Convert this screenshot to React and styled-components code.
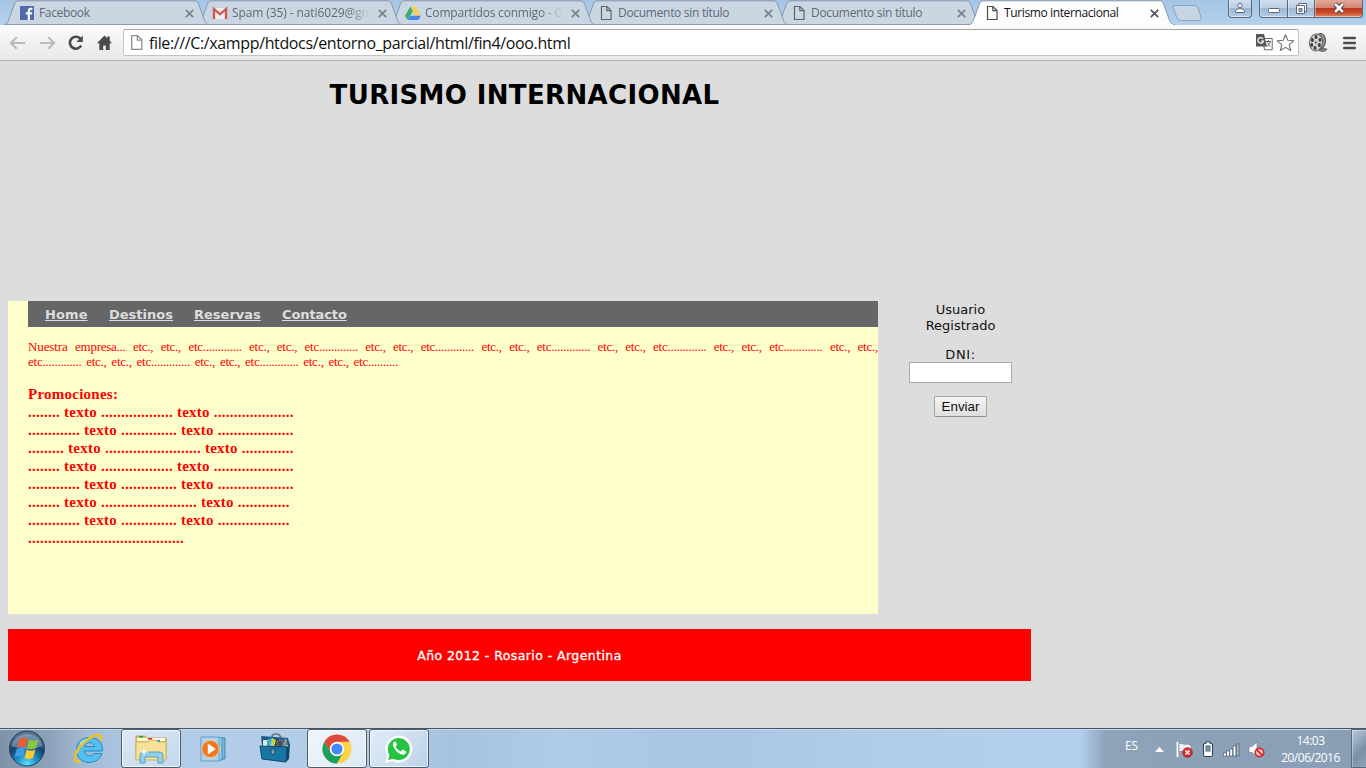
import React from "react";
import styled, { createGlobalStyle } from "styled-components";

const ui = '"Open Sans", "Noto Sans", sans-serif';
const verdana = '"DejaVu Sans", sans-serif';
const times = '"Liberation Serif", serif';

const GlobalStyle = createGlobalStyle`
  * { box-sizing: border-box; }
  body { margin: 0; overflow: hidden; }
`;

const Screen = styled.div`
  width: 1366px;
  height: 768px;
  display: flex;
  flex-direction: column;
  overflow: hidden;
  background: #dddddd;
`;

/* Browser window */
const TabStrip = styled.div`
  height: 25px;
  flex: none;
  display: flex;
  padding-left: 4px;
  background: linear-gradient(#a6c5e5 0, #b4d0ec 100%);
  position: relative;
  z-index: 1;
`;
const TabItem = styled.div`
  position: relative;
  z-index: ${(p) => p.$z};
  width: 206px;
  height: 25px;
  margin-right: -13px;
  flex: none;
  display: flex;
  align-items: center;
  padding: 1px 5px 0 15px;
`;
const TabShape = styled.svg`
  position: absolute;
  left: 0;
  top: 0;
  z-index: -1;
`;
const TabIcon = styled.span`
  width: 16px;
  height: 16px;
  flex: none;
  svg { display: block; }
`;
const TabTitle = styled.span`
  width: 141px;
  margin-left: 4px;
  white-space: nowrap;
  font: 12px/16px ${ui};
  letter-spacing: ${(p) => p.$ls}px;
  color: ${(p) => (p.$active ? "#111" : "#606a74")};
  mask-image: ${(p) => (p.$fade ? "linear-gradient(90deg, #000 82%, transparent 98%)" : "none")};
`;
const TabClose = styled.svg`
  margin-left: auto;
  margin-right: 11px;
  flex: none;
`;
const NewTab = styled.svg`
  flex: none;
  margin-left: 9px;
`;
const WindowButtons = styled.div`
  margin-left: auto;
  margin-right: 3px;
  display: flex;
  align-items: flex-start;
`;
const WinButton = styled.div`
  width: ${(p) => p.$w}px;
  height: 18px;
  margin-right: ${(p) => p.$gap || 0}px;
  display: flex;
  align-items: center;
  justify-content: center;
  padding-bottom: 1px;
  border: 1px solid #56697f;
  border-top: 0;
  border-left-width: ${(p) => (p.$joined ? 0 : 1)}px;
  border-radius: ${(p) => p.$radius};
  background: ${(p) =>
    p.$close
      ? "linear-gradient(#e3a99b 0, #d08672 45%, #bc3a1c 50%, #c84b2a 75%, #df8a67 100%)"
      : "linear-gradient(#cfdeee 0, #bccfe3 45%, #9db7d2 50%, #b4cce4 100%)"};
  box-shadow: inset 0 -1px 0 rgba(255,255,255,.5), inset 1px 0 0 rgba(255,255,255,.35);
`;
const Toolbar = styled.div`
  height: 36px;
  flex: none;
  display: flex;
  align-items: center;
  padding: 0 10px 0 8px;
  background: linear-gradient(#fbfbfb, #e8e8e8);
  border-bottom: 1px solid #b1b1b1;
  svg { flex: none; }
`;
const NavIcons = styled.div`
  display: flex;
  gap: 9px;
  width: 115px;
  height: 20px;
`;
const AddressBar = styled.div`
  width: 1176px;
  height: 27px;
  display: flex;
  align-items: center;
  padding: 0 3px 0 4px;
  background: #fff;
  border: 1px solid #c3c3c3;
  border-top-color: #a4a4a4;
  border-radius: 2px;
`;
const Url = styled.span`
  flex: 1;
  margin-left: 4px;
  white-space: nowrap;
  font: 16px/22px ${ui};
  letter-spacing: -0.37px;
  color: #111;
`;
const ToolbarExtras = styled.div`
  display: flex;
  align-items: center;
  gap: 14px;
  margin-left: auto;
`;

/* Web page */
const Page = styled.main`
  flex: 1;
  width: 1039px;
  padding: 0 8px;
  font-family: ${verdana};
  display: flex;
  flex-direction: column;
`;
const Header = styled.header`
  height: 240px;
  padding-top: 18px;
  text-align: center;
`;
const Title = styled.h1`
  margin: 0 0 0 10px;
  font: bold 26px/33px ${verdana};
  letter-spacing: 0.35px;
  color: #000;
`;
const Columns = styled.div`
  display: flex;
  height: 313px;
`;
const Content = styled.section`
  width: 870px;
  padding-left: 20px;
  background: #ffffcc;
`;
const Menu = styled.nav`
  height: 26px;
  padding: 1px 0 0 17px;
  display: flex;
  align-items: center;
  gap: 21px;
  background: #666666;
`;
const MenuLink = styled.a`
  width: ${(p) => p.$w}px;
  white-space: nowrap;
  font: bold 13px/16px ${verdana};
  letter-spacing: ${(p) => p.$ls}px;
  color: #dddddd;
  text-decoration: underline;
`;
const Intro = styled.div`
  padding-top: 12px;
  height: 57px;
  font: 13px/15px ${times};
  color: #ff0000;
`;
const IntroLine = styled.div`
  width: ${(p) => p.$w}px;
  white-space: nowrap;
  text-align: justify;
  text-align-last: justify;
  letter-spacing: -0.25px;
`;
const Lead = styled.span`
  letter-spacing: -0.1px;
`;
const Promo = styled.div`
  padding-top: 1px;
  font: bold 15px/18px ${times};
  letter-spacing: 0.25px;
  color: #ff0000;
  white-space: nowrap;
`;
const Sidebar = styled.aside`
  width: 103px;
  margin-left: 31px;
  display: flex;
  flex-direction: column;
  align-items: center;
  text-align: center;
  font: 13px/16px ${verdana};
  color: #111;
`;
const SideLabel = styled.div`
  padding-top: ${(p) => p.$top}px;
  height: ${(p) => p.$h}px;
  letter-spacing: ${(p) => p.$ls || 0}px;
`;
const DniInput = styled.input`
  width: 103px;
  height: 21px;
  margin: 0;
  padding: 1px;
  background: #fff;
  border: 1px solid #a9a9a9;
  border-radius: 0;
`;
const SendButton = styled.button`
  width: 53px;
  height: 21px;
  margin: 13px 0 0;
  padding: 0;
  font: 13.33px/17px "Liberation Sans", sans-serif;
  color: #111;
  background: linear-gradient(#f6f6f6, #dedede);
  border: 1px solid #a5a5a5;
  border-bottom-color: #8f8f8f;
  border-radius: 2px;
`;
const Footer = styled.footer`
  height: 52px;
  margin-top: 15px;
  padding-top: 2px;
  display: flex;
  align-items: center;
  justify-content: center;
  background: #ff0000;
  color: #fff;
  font: 12.5px/16px ${verdana};
  letter-spacing: 0.42px;
  -webkit-text-stroke: 0.3px #fff;
`;

/* Taskbar */
const Taskbar = styled.div`
  height: 40px;
  flex: none;
  display: flex;
  border-top: 1px solid #45566a;
  box-shadow: inset 0 1px 0 #c9d9e9;
  background: linear-gradient(90deg, #7f93a8 0, #8da2b9 50px, #a3bbd5 85px, #b3cde9 150px, #b3cde9 390px, #a6c2df 450px, #b0cbe8 560px, #a8c5e4 700px, #b0cde9 900px, #b2cfee 1080px, #8ea3b9 1106px, #8a9fb6 1366px);
`;
const Start = styled.div`
  width: 59px;
  padding: 1px 0 0 8px;
`;
const Task = styled.div`
  width: 60px;
  height: 39px;
  margin-right: 2px;
  display: flex;
  align-items: center;
  justify-content: center;
  border: 1px solid ${(p) => (p.$open ? "#4a5b6d" : "transparent")};
  border-radius: 3px;
  background: ${(p) => (p.$open ? `linear-gradient(135deg, rgba(255,255,255,${p.$lit ? 0.8 : 0.6}), rgba(255,255,255,${p.$lit ? 0.55 : 0.2}))` : "none")};
  box-shadow: ${(p) => (p.$open ? "inset 0 0 0 1px rgba(255,255,255,.7)" : "none")};
`;
const Tray = styled.div`
  margin-left: auto;
  display: flex;
  align-items: center;
  color: #fff;
  font: 12px/17px ${ui};
`;
const Lang = styled.span`
  width: 30px;
  font-size: 12px;
  letter-spacing: -0.2px;
  padding-bottom: 6px;
`;
const TrayIcons = styled.div`
  display: flex;
  width: 112px;
  align-items: center;
  gap: 8px;
`;
const TrayGlyph = styled.span`
  display: flex;
  margin-left: ${(p) => p.$left || 0}px;
  padding-top: ${(p) => p.$drop || 0}px;
`;
const Clock = styled.div`
  width: 77px;
  margin-left: 5px;
  text-align: center;
  letter-spacing: -0.5px;
`;
const ShowDesktop = styled.div`
  width: 15px;
  height: 39px;
  margin-left: 2px;
  border: 1px solid #566a80;
  border-right: 0;
  background: linear-gradient(135deg, #b9c8d8, #7b90a7 60%, #8fa4ba);
  box-shadow: inset 1px 1px 0 rgba(255,255,255,.35);
`;

const FacebookIcon = () => (
  <svg width="16" height="16" viewBox="0 0 16 16">
    <rect x="1" y="1" width="14" height="14" fill="#4f6aa8" />
    <path d="M11 15V9.600h2l.3-2.300H11V6c0-.7.3-1.1 1.200-1.100h1.200V2.900C13 2.800 12.400 2.800 11.700 2.800 9.800 2.800 8.700 3.900 8.700 5.700v1.600H6.800v2.300h1.900V15z" fill="#f4f7fb" />
  </svg>
);
const GmailIcon = () => (
  <svg width="16" height="16" viewBox="0 0 16 16">
    <path d="M1 3h14v11H1z" fill="#eceff3" />
    <path d="M2 14V4l6 5.300L14 4v10" fill="none" stroke="#d2554d" strokeWidth="2.300" />
  </svg>
);
const DriveIcon = () => (
  <svg width="16" height="16" viewBox="0 0 16 16">
    <path d="M5.400 1.500 0 10.800l2.700 4.200L8 5.900z" fill="#3aae6b" />
    <path d="M5.400 1.500h5.200l5.300 9.300h-5.200z" fill="#f5cf55" />
    <path d="M5.300 10.800h10.600L13.300 15H2.700z" fill="#4a86e8" />
  </svg>
);
const PageIcon = ({ color = "#5d666f", size = 16 }) => (
  <svg width={size} height={size} viewBox="0 0 16 16">
    <path d="M3.500 1.500H9l4 4v9H3.500z" fill="none" stroke={color} strokeWidth="1.200" />
    <path d="M8.800 1.500v4.200H13" fill="none" stroke={color} strokeWidth="1.200" />
  </svg>
);

const Tab = ({ icon, title, active, fade, z, ls }) => (
  <TabItem $z={z}>
    <TabShape width="206" height="25">
      <path
        d="M-1 25C3 24 4 22 5 19L10 5C11 2 12 .8 15 .8H190C193 .8 194 2 195 5L200 19C201 22 202 24 206 25z"
        fill={active ? "#fdfdfd" : "#cbd6e3"}
        stroke="#8798ad"
        strokeWidth="1"
      />
      {active ? <path d="M2 24.500H204" stroke="#fbfbfb" /> : <path d="M0 24.500H206" stroke="#8c9aac" />}
    </TabShape>
    <TabIcon>{icon}</TabIcon>
    <TabTitle $active={active} $fade={fade} $ls={ls}>{title}</TabTitle>
    <TabClose width="9" height="9" viewBox="0 0 9 9">
      <path d="M.8.8 8.200 8.200M8.200.8.8 8.200" stroke={active ? "#505458" : "#78828d"} strokeWidth="1.700" />
    </TabClose>
  </TabItem>
);

const tabs = [
  { icon: <FacebookIcon />, title: "Facebook", ls: -0.35 },
  { icon: <GmailIcon />, title: "Spam (35) - nati6029@gm", ls: -0.1, fade: true },
  { icon: <DriveIcon />, title: "Compartidos conmigo - G", ls: -0.2, fade: true },
  { icon: <PageIcon />, title: "Documento sin título", ls: -0.3 },
  { icon: <PageIcon />, title: "Documento sin título", ls: -0.3 },
  { icon: <PageIcon color="#4d4d4d" />, title: "Turismo internacional", ls: -0.38, active: true },
];

const ArrowIcon = ({ flip }) => (
  <svg width="20" height="20" viewBox="0 0 20 20">
    <path
      d="M2.500 10H17M8.700 4.200 3 10l5.700 5.800"
      transform={flip ? "translate(20 0) scale(-1 1)" : undefined}
      fill="none" stroke="#bcbcbc" strokeWidth="2.200"
    />
  </svg>
);
const ReloadIcon = () => (
  <svg width="20" height="20" viewBox="0 0 20 20">
    <path d="M15.200 12.500A6 6 0 1 1 14.200 5.500" fill="none" stroke="#4b4b4b" strokeWidth="2.600" />
    <path d="M16.800 2.500V9h-6.500z" fill="#4b4b4b" />
  </svg>
);
const HomeIcon = () => (
  <svg width="20" height="20" viewBox="0 0 20 20">
    <path d="M9.500 2.500 2 10.300h2.300V17h3.900v-4.500h2.600V17h3.900v-6.700H17L14.700 7.800V3.500h-2.500v1.800z" fill="#4b4b4b" />
  </svg>
);
const TranslateIcon = () => (
  <svg width="19" height="17" viewBox="0 0 19 17">
    <path d="M6.500 4.500h9.700v11.300H8.500z" fill="#fff" stroke="#686868" />
    <path d="M0 0h8l3 12.500H0z" fill="#575757" />
    <path d="M7 4.800A2.800 2.800 0 1 0 7.400 7H5" fill="none" stroke="#fff" strokeWidth="1.200" />
    <path d="M10 7.500h5M12.500 6v1.500M14.300 7.500c-.6 2.500-2 4-3.300 5M11.300 8.500c.7 1.800 1.800 3 3.200 4" fill="none" stroke="#666" />
  </svg>
);
const StarIcon = () => (
  <svg width="20" height="20" viewBox="0 0 20 20">
    <path d="m10.500 1.800 2.300 5.500 6 .5-4.600 3.900 1.500 5.800-5.200-3.100-5.200 3.100 1.500-5.800-4.600-3.900 6-.5z" fill="#fff" stroke="#737373" strokeWidth="1.100" strokeLinejoin="round" />
  </svg>
);
const ReelIcon = () => (
  <svg width="21" height="21" viewBox="0 0 21 21">
    <path d="M13 13c2 3 3 4 6 4-1 3-6 3-9 1z" fill="#888" stroke="#444" strokeWidth=".7" />
    <ellipse cx="12" cy="9.500" rx="5.500" ry="8" transform="rotate(8 12 9.500)" fill="#8d8d8d" stroke="#555" />
    <ellipse cx="8" cy="10.500" rx="6.500" ry="8.500" transform="rotate(8 8 10.500)" fill="#d2d2d2" stroke="#666" />
    {[[8, 5], [12, 7.800], [11.300, 13], [7, 16], [3.700, 13], [4.400, 8]].map(([x, y]) => (
      <ellipse key={`${x}-${y}`} cx={x} cy={y} rx="1.500" ry="1.900" fill="#3d3d3d" />
    ))}
    <circle cx="7.800" cy="10.500" r=".9" fill="#333" />
  </svg>
);
const MenuIcon = () => (
  <svg width="13" height="14" viewBox="0 0 13 14">
    <path d="M1.200 2h10.600M1.200 7h10.600M1.200 12h10.600" stroke="#4b4b4b" strokeWidth="2.600" strokeLinecap="round" />
  </svg>
);

const StartOrb = () => (
  <svg width="38" height="38" viewBox="0 0 38 38">
    <defs>
      <radialGradient id="orb" cx=".5" cy=".95" r=".95">
        <stop offset="0" stopColor="#5de4ff" /><stop offset=".3" stopColor="#1f93c8" />
        <stop offset=".62" stopColor="#15436f" /><stop offset="1" stopColor="#637f9a" />
      </radialGradient>
    </defs>
    <circle cx="19" cy="18.500" r="17.500" fill="url(#orb)" stroke="#233f5c" />
    <path d="M3.500 16a16 16 0 0 1 31 0c-9 4-21 4-31 0z" fill="#dce9f2" opacity=".35" />
    <path d="M11.500 9c3-2 5.500-1.500 8 0l-2 8.500c-2.500-1.500-5-2-8.500 0z" fill="#ed5d2d" />
    <path d="M21 9.600c2.500 1.500 6 1.700 9.500-.1l-2.500 8.500c-3 1.800-6.500 1.500-9 0z" fill="#8cc63e" />
    <path d="M8.700 18.900c3-1.800 5.500-1.300 8.300 0l-2 8.300c-2.500-1.500-5-1.800-8.500 0z" fill="#3f9be4" />
    <path d="M18.500 19.500c2.500 1.500 6 1.700 9-.1l-2.300 8.300c-3 1.800-6.200 1.500-8.700 0z" fill="#fdc92e" />
  </svg>
);
const ExplorerE = () => (
  <svg width="34" height="34" viewBox="0 0 34 34">
    <path d="M30.500 19H12.500c.2 3 2.200 4.700 5 4.700 2 0 3.500-.8 4.300-2.200h8.200C28.500 27 23.500 30.500 17.300 30.500 10 30.500 4.500 25.500 4.500 18S10 5.500 17.300 5.500C25.500 5.500 31 10.500 30.500 19zM12.700 14.600h9.600c-.5-2.600-2.200-3.900-4.700-3.900s-4.300 1.400-4.900 3.900z" fill="#54c0ee" stroke="#2389c8" strokeWidth="1" />
    <path d="M8 11c2.500-3.200 6-4.500 10-4-3.500 1.200-7.500 3.500-10.500 7z" fill="#b4e7fb" />
    <path d="M28.500 9c1.500-4 .5-6.500-3-6C17 4 5.500 15 3.200 24c-1 4 1 6.500 5 5" fill="none" stroke="#f3bf27" strokeWidth="2.600" />
  </svg>
);
const FolderIcon = () => (
  <svg width="34" height="34" viewBox="0 0 34 34">
    <path d="M2 4h9l2 2h19v21H2z" fill="#e6c967" stroke="#b89234" strokeWidth=".8" />
    <path d="M3 6h28v3H3z" fill="#fff8e0" />
    <path d="M5 4h4v1.500H5z" fill="#15a93c" /><path d="M14 6h4v1.700h-4z" fill="#d63d2b" /><path d="M22 8h4v2h-4z" fill="#2991dc" />
    <path d="M2 10h12l2-2h6l2 2h8v18H2z" fill="#f6e297" stroke="#cfaa4b" strokeWidth=".8" />
    <path d="M6 31V23q0-3 3-3h17q3 0 3 3v8h-5v-6H11v6z" fill="#91cfea" stroke="#4a95b9" strokeWidth=".8" />
    <path d="m10 15 .8 4.200L15 20l-4.200.8L10 25l-.8-4.200L5 20l4.200-.8z" fill="#fff" />
  </svg>
);
const PlayerIcon = () => (
  <svg width="30" height="30" viewBox="0 0 30 30">
    <path d="M11 4h16v21H11z" fill="#78b9dd" stroke="#4485ad" /><path d="M8 3.500h16v22.500H8z" fill="#9ecfe9" stroke="#4b8db5" />
    <path d="M3 3h18v24H3z" fill="#a9d4ec" stroke="#609cc2" />
    <circle cx="12.500" cy="15" r="8.700" fill="#f07820" stroke="#fbc79b" />
    <path d="m9.800 9.500 8 5.500-8 5.500z" fill="#fff" />
  </svg>
);
const ToolboxIcon = () => (
  <svg width="34" height="34" viewBox="0 0 34 34">
    <path d="M14 5q0-3 4-3t5 4" fill="none" stroke="#69747e" strokeWidth="1.700" />
    <path d="m3 4 27 2 2 7H4z" fill="#1b5f8c" />
    <path d="m4 8 8-2 17 3v9H5z" fill="#263d3f" />
    <path d="M5 8h5v7H5z" fill="#dce7d8" /><path d="m9 7 6-1-1 8H9z" fill="#38a7e1" /><path d="m14 6 4 2-2 7h-4z" fill="#c7d447" />
    <circle cx="22" cy="11.500" r="3.500" fill="#46505a" stroke="#bcc6cd" strokeDasharray="1.500 1" /><path d="M26 7h3v9h-4z" fill="#839197" />
    <path d="m2 14 27 1-1 15L4 27z" fill="#1876a7" stroke="#0c4869" /><path d="m29 15 3-4-1 16-3 3z" fill="#0d4566" />
    <path d="M13 17h4v4l-2 2-2-2z" fill="#719fb5" stroke="#174b66" />
  </svg>
);
const ChromeIcon = () => (
  <svg width="30" height="30" viewBox="0 0 30 30">
    <circle cx="15" cy="15" r="14.500" fill="#fdd349" />
    <path d="M2.440 7.750A14.500 14.500 0 0 1 27.560 7.750H15A7.250 7.250 0 0 0 8.720 18.620z" fill="#dd4b3e" />
    <path d="M2.440 7.750A14.500 14.500 0 0 0 15 29.500L21.280 18.620A7.250 7.250 0 0 1 8.720 18.620z" fill="#1aa05f" />
    <circle cx="15" cy="15" r="7" fill="#fff" /><circle cx="15" cy="15" r="5.600" fill="#4488f4" />
  </svg>
);
const WhatsAppIcon = () => (
  <svg width="30" height="30" viewBox="0 0 30 30">
    <path d="m1 29 2-7.300A13.500 13.500 0 1 1 8.500 27z" fill="#fff" />
    <path d="m4.200 26 1.300-5A11 11 0 1 1 9.400 24.700z" fill="#25c43f" />
    <path d="M10.500 7.500c-2 1.200-2 3.500-.7 6 2 4 5.500 6.700 9 7.300 2 .2 3.500-1.300 3.500-3.200l-3.500-2-2 2c-2.500-1-4.200-2.700-5.200-5l1.500-1.800-1.400-3.300z" fill="#fff" />
  </svg>
);
const FlagIcon = () => (
  <svg width="17" height="17" viewBox="0 0 17 17">
    <path d="M1.500 1v15" stroke="#fff" strokeWidth="1.800" /><path d="M3 2.500c3-1 5 2 8 .5l4 1v7c-3 1-5-1.500-8-.5H3z" fill="#edf1f5" stroke="#69798a" strokeWidth=".6" />
    <circle cx="11.500" cy="11.500" r="4.800" fill="#dc302c" stroke="#951817" strokeWidth=".7" /><path d="m9.500 9.500 4 4m0-4-4 4" stroke="#fff" strokeWidth="1.500" />
  </svg>
);
const BatteryIcon = () => (
  <svg width="12" height="17" viewBox="0 0 12 17">
    <path d="M4 .8h4v1.700h1q1.500 0 1.500 1.500v10q0 1.500-1.500 1.500H3Q1.500 15.500 1.500 14V4q0-1.500 1.500-1.500h1z" fill="#fff" stroke="#2d3b49" strokeWidth="1" />
    <path d="M3.300 4.300h5.400v6.400H3.300z" fill="#7388a0" />
  </svg>
);
const SignalIcon = () => (
  <svg width="17" height="15" viewBox="0 0 17 15">
    {[3, 5, 7, 10, 12].map((h, i) => <rect key={h} x={0.5 + i * 3.2} y={14 - h} width="2.800" height={h} fill={i === 4 ? "#a6b5c5" : "#fff"} stroke="#4d5f72" strokeWidth=".7" />)}
  </svg>
);
const SpeakerIcon = () => (
  <svg width="17" height="17" viewBox="0 0 17 17">
    <path d="M1 5.500h3L9 1v15l-5-4.500H1z" fill="#fff" stroke="#63768a" strokeWidth=".6" />
    <circle cx="11.500" cy="11.500" r="4.200" fill="#f3dada" stroke="#d92425" strokeWidth="1.800" /><path d="m8.700 8.700 5.600 5.600" stroke="#d92425" strokeWidth="1.800" />
  </svg>
);

const dots = (n) => ".".repeat(n);
const etc = "etc., etc., etc" + dots(13);
const promoLines = [[8, 18, 20], [13, 14, 19], [9, 24, 13], [8, 18, 20], [13, 14, 19], [8, 24, 13], [13, 14, 18]];

export default function App() {
  return (
    <Screen>
      <GlobalStyle />
      <TabStrip>
        {tabs.map((t, i) => <Tab key={i} {...t} z={t.active ? 9 : 6 - i} />)}
        <NewTab width="31" height="25">
          <path d="M3 5.500H23Q26 5.500 27 8L30 17Q31 20.500 28 20.500H10Q7 20.500 6 18L2 7Q1.500 5.500 3 5.500z" fill="#c6d4e4" stroke="#8ea5bf" />
        </NewTab>
        <WindowButtons>
          <WinButton $w={24} $gap={7} $radius="0 0 4px 4px">
            <svg width="12" height="12" viewBox="0 0 12 12"><circle cx="6" cy="3.500" r="2.200" fill="#fff" stroke="#5b6b7e" /><path d="M1.500 10.500V9q0-2 4.500-2.500 4.500.5 4.500 2.500v1.500z" fill="#fff" stroke="#5b6b7e" /></svg>
          </WinButton>
          <WinButton $w={29} $radius="0 0 0 4px">
            <svg width="14" height="12"><rect x="1.500" y="6.500" width="11" height="4" rx="1" fill="#fff" stroke="#58687a" /></svg>
          </WinButton>
          <WinButton $w={27} $joined $radius="0">
            <svg width="13" height="13" viewBox="0 0 13 13"><path d="M3.500 1.500h8v8h-8z" fill="#fff" stroke="#58687a" /><path d="M1.500 3.500h8v8h-8z" fill="#fff" stroke="#58687a" /><path d="M4 6.500h3v3H4z" fill="#a5bcd3" stroke="#58687a" /></svg>
          </WinButton>
          <WinButton $w={48} $joined $close $radius="0 0 4px 0">
            <svg width="14" height="12" viewBox="0 0 14 12"><path d="m3 2 8 8m0-8-8 8" stroke="#5b4a55" strokeWidth="4.600" /><path d="m3.200 2.200 7.600 7.600m0-7.600-7.600 7.600" stroke="#fff" strokeWidth="2.600" /></svg>
          </WinButton>
        </WindowButtons>
      </TabStrip>
      <Toolbar>
        <NavIcons><ArrowIcon /><ArrowIcon flip /><ReloadIcon /><HomeIcon /></NavIcons>
        <AddressBar>
          <PageIcon color="#8b8b8b" size={17} />
          <Url>file:///C:/xampp/htdocs/entorno_parcial/html/fin4/ooo.html</Url>
          <TranslateIcon /><StarIcon />
        </AddressBar>
        <ToolbarExtras><ReelIcon /><MenuIcon /></ToolbarExtras>
      </Toolbar>

      <Page>
        <Header><Title>TURISMO INTERNACIONAL</Title></Header>
        <Columns>
          <Content>
            <Menu>
              <MenuLink $w={43} $ls={0.1}>Home</MenuLink>
              <MenuLink $w={64} $ls={0}>Destinos</MenuLink>
              <MenuLink $w={67} $ls={0}>Reservas</MenuLink>
              <MenuLink $w={66} $ls={-0.1}>Contacto</MenuLink>
            </Menu>
            <Intro>
              <IntroLine $w={850}><Lead>Nuestra</Lead> empresa... {Array(6).fill(etc).join(" ")} etc., etc.,</IntroLine>
              <IntroLine $w={370}>etc{dots(13)} {etc} {etc} etc., etc., etc{dots(10)}</IntroLine>
            </Intro>
            <Promo>
              <div>Promociones:</div>
              {promoLines.map(([a, b, c], i) => <div key={i}>{dots(a)} texto {dots(b)} texto {dots(c)}</div>)}
              <div>{dots(39)}</div>
            </Promo>
          </Content>
          <Sidebar>
            <SideLabel $top={1} $h={33}>Usuario<br />Registrado</SideLabel>
            <SideLabel $top={13} $h={28} $ls={0.6}>DNI:</SideLabel>
            <DniInput aria-label="DNI" />
            <SendButton>Enviar</SendButton>
          </Sidebar>
        </Columns>
        <Footer>Año 2012 - Rosario - Argentina</Footer>
      </Page>

      <Taskbar>
        <Start><StartOrb /></Start>
        <Task><ExplorerE /></Task>
        <Task $open><FolderIcon /></Task>
        <Task><PlayerIcon /></Task>
        <Task><ToolboxIcon /></Task>
        <Task $open $lit><ChromeIcon /></Task>
        <Task $open><WhatsAppIcon /></Task>
        <Tray>
          <Lang>ES</Lang>
          <TrayIcons>
            <TrayGlyph $drop={2}><svg width="9" height="5"><path d="M0 5 4.500 0 9 5z" fill="#fff" /></svg></TrayGlyph>
            <TrayGlyph $left={4} $drop={1}><FlagIcon /></TrayGlyph>
            <TrayGlyph $left={1} $drop={1}><BatteryIcon /></TrayGlyph>
            <TrayGlyph $left={1} $drop={1}><SignalIcon /></TrayGlyph>
            <TrayGlyph $drop={1}><SpeakerIcon /></TrayGlyph>
          </TrayIcons>
          <Clock>14:03<br />20/06/2016</Clock>
          <ShowDesktop />
        </Tray>
      </Taskbar>
    </Screen>
  );
}
